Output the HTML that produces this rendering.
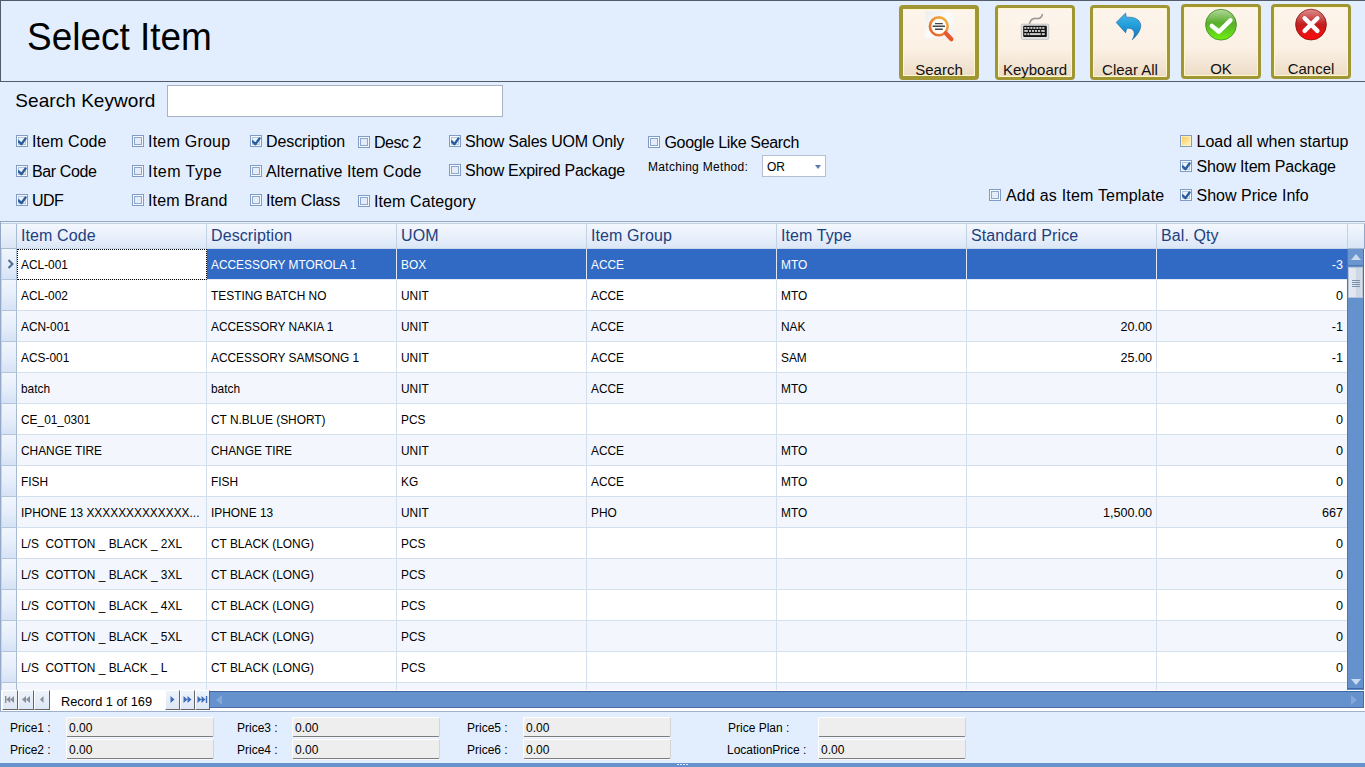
<!DOCTYPE html>
<html><head><meta charset="utf-8">
<style>
*{box-sizing:border-box;margin:0;padding:0}
html,body{width:1365px;height:767px;overflow:hidden}
body{position:relative;background:#e2eefd;font-family:"Liberation Sans",sans-serif;color:#000}
.abs{position:absolute}
.t{position:absolute;white-space:pre;line-height:1}
#hdrpanel{position:absolute;left:0;top:0;width:1366px;height:82px;border:1px solid #535b68;border-right:none}
.btn{position:absolute;width:80px;height:75px;border:3px solid #a09634;border-radius:4px;background:linear-gradient(#fdf5ec 0%,#fbf0e4 60%,#ecdcc6 100%);box-shadow:inset 0 0 0 1px #fff7c8}
.btn .lbl{position:absolute;left:0;right:0;top:53.5px;text-align:center;font-size:15px;letter-spacing:0px;color:#111;line-height:15px}
.cb{position:absolute;width:12px;height:12px;border:1px solid #7f9bc6;background:#eaf3fc;box-shadow:inset 0 0 0 1px #f2f9ff}
.cb.u::after{content:"";box-sizing:border-box;position:absolute;left:1px;top:1px;width:8px;height:8px;border:1px solid #8ea6ca;background:#e3ecf8}
.cb.y{background:linear-gradient(135deg,#f9c94e,#fde9a8 70%,#fff3c8);box-shadow:inset 0 0 0 1px #fff2c0}
.cb.c::before{content:"";box-sizing:border-box;position:absolute;left:1px;top:1px;width:8px;height:8px;border:1px solid #b4c6de}
.cb.c svg{position:absolute;left:1px;top:1px}
.cl{position:absolute;white-space:pre;font-size:16px;line-height:1;color:#000}
#search{position:absolute;left:167px;top:85px;width:336px;height:32px;background:#fff;border:1px solid #a7b2c3}
#grid{position:absolute;left:0;top:221px;width:1365px;height:490px;border-top:1px solid #93a7c6;border-left:1px solid #93a7c6;background:#fff;overflow:hidden}
.hcell{position:absolute;top:222px;height:27px;background:linear-gradient(#f5f8fe,#e9f0fb 55%,#dbe6f6);border-right:1px solid #c3d1e5;border-bottom:1px solid #c8d6ea}
.hcell span{position:absolute;left:4px;top:6px;font-size:16px;line-height:1;color:#213f80;white-space:pre;letter-spacing:0.1px}
.row{position:absolute;left:17px;width:1330px;height:31px}
.cell{position:absolute;top:0;height:31px;border-right:1px solid #d5e0ee;border-bottom:1px solid #d5e0ee;background:#fff}
.row.alt .cell{background:#f3f7fd}
.row.sel .cell{background:#316ac5;color:#fff;border-right-color:#e0e8f4;border-bottom-color:#e0e8f4}
.row.sel .cell.focus{background:#fff;color:#000;outline:1px dotted #000;outline-offset:-1px}
.cell span{position:absolute;left:4px;top:10.9px;font-size:11.9px;line-height:1;white-space:pre}
.cell.r span{left:auto;right:4px;font-size:12.6px;top:10.4px}
.ind{position:absolute;left:1px;width:16px;height:31px;background:linear-gradient(#f1f6fd,#e6eefa 50%,#d5e3f6);border-left:1px solid #c9d7ea;border-right:1px solid #a9bad3;border-bottom:1px solid #b3c4dc}
.nb{position:absolute;top:690px;width:16px;height:20px;background:linear-gradient(#eef3fb,#dde7f5);border-left:1px solid #fff;border-top:1px solid #fff;border-right:1px solid #666;border-bottom:1px solid #666}
.nb svg{position:absolute;left:0;top:0}
.pl{position:absolute;font-size:12px;line-height:1;white-space:pre;color:#000}
.pf{position:absolute;width:148px;height:20px;background:#eeeeee;border-bottom:1px solid #7c7c7c;border-top:1px solid #fff;border-left:1px solid #fff;border-right:1px solid #d4d4d4;border-radius:2px;box-shadow:0 1px 0 #f4f8fd}
.pf span{position:absolute;left:2px;top:4px;font-size:12px;line-height:1}
</style></head><body>

<div id="hdrpanel"></div>
<div class="t" style="left:27.3px;top:17.2px;font-size:39px;transform:scaleX(0.947);transform-origin:0 0">Select Item</div>

<div class="btn" style="left:899px;top:5px;border-width:4px"><div class="lbl" style="top:52.5px">Search</div></div>
<div class="btn" style="left:995px;top:5px"><div class="lbl">Keyboard</div></div>
<div class="btn" style="left:1090px;top:5px"><div class="lbl">Clear All</div></div>
<div class="btn" style="left:1181px;top:4px"><div class="lbl">OK</div></div>
<div class="btn" style="left:1271px;top:4px"><div class="lbl">Cancel</div></div>


<!-- button icons -->
<svg class="abs" style="left:918px;top:6px" width="42" height="38" viewBox="0 0 42 38">
 <defs>
  <linearGradient id="docg" x1="0" y1="0" x2="1" y2="1"><stop offset="0" stop-color="#ededed"/><stop offset="0.5" stop-color="#fbfbfb"/><stop offset="1" stop-color="#f2f2f2"/></linearGradient>
  <linearGradient id="ring" x1="1" y1="0" x2="0" y2="1"><stop offset="0" stop-color="#f2bd48"/><stop offset="1" stop-color="#e85a26"/></linearGradient>
 </defs>
 <path d="M7 5 H31 L35 9 V32 H7 Z" fill="url(#docg)"/>
 <circle cx="20.8" cy="20.3" r="8.9" fill="#fff" stroke="url(#ring)" stroke-width="2.6"/>
 <path d="M27.8 27.3 L33.4 33.2" stroke="#e8582a" stroke-width="4.2" stroke-linecap="round"/>
 <path d="M17 17.6 H24.8 M14.6 20.3 H27 M17 23.3 H24.8" stroke="#444" stroke-width="1.4"/>
</svg>
<svg class="abs" style="left:1014px;top:8px" width="42" height="36" viewBox="0 0 42 36">
 <path d="M15.5 15.8 C16.5 11 19 9.8 23 10.5 C26 11 27.5 9.5 28.4 6.6" stroke="#9a9a9a" stroke-width="1.6" fill="none" stroke-linecap="round"/>
 <rect x="7.3" y="16.2" width="27.4" height="15.2" rx="1" fill="#e2e2e2" stroke="#bdbdbd" stroke-width="0.8"/>
 <rect x="9.2" y="17.8" width="23.6" height="11.1" rx="1" fill="#111"/>
 <g fill="#c8c8c8">
  <rect x="10.3" y="19" width="2.1" height="1.9"/><rect x="13.3" y="19" width="2.1" height="1.9"/><rect x="16.3" y="19" width="2.1" height="1.9"/><rect x="19.3" y="19" width="2.1" height="1.9"/><rect x="22.3" y="19" width="2.1" height="1.9"/><rect x="25.3" y="19" width="2.1" height="1.9"/><rect x="28.3" y="19" width="2.1" height="1.9"/>
  <rect x="10.3" y="22" width="3.6" height="1.9"/><rect x="15" y="22" width="2.1" height="1.9"/><rect x="18" y="22" width="2.1" height="1.9"/><rect x="21" y="22" width="2.1" height="1.9"/><rect x="24" y="22" width="2.1" height="1.9"/><rect x="27.2" y="22" width="3.6" height="1.9"/>
  <rect x="10.3" y="25.1" width="2.1" height="2"/><rect x="13.3" y="25.1" width="2.1" height="2"/><rect x="16" y="25.1" width="10.8" height="2"/><rect x="27.8" y="25.1" width="3" height="2"/>
 </g>
</svg>
<svg class="abs" style="left:1108px;top:8px" width="42" height="38" viewBox="0 0 42 38">
 <defs><linearGradient id="arr" x1="0" y1="0" x2="0" y2="1"><stop offset="0" stop-color="#4cb4e6"/><stop offset="0.45" stop-color="#22a0dc"/><stop offset="1" stop-color="#1670b4"/></linearGradient></defs>
 <path d="M8.2 14.4 L17.6 5 L18.3 9.2 C24 9 30 9.5 32.4 15.5 C34 20 30 27 24.3 31.7 C26.6 27.5 27 24 24.8 21.9 C23 20.3 21 20.2 18.8 20.4 L17.6 24.8 Z" fill="url(#arr)" stroke="#1a5f98" stroke-width="0.6" stroke-linejoin="round"/>
</svg>
<svg class="abs" style="left:1200px;top:4px" width="42" height="42" viewBox="0 0 42 42">
 <defs><linearGradient id="okg" x1="0" y1="0" x2="0" y2="1"><stop offset="0" stop-color="#b4d89a"/><stop offset="0.45" stop-color="#58ae2c"/><stop offset="1" stop-color="#6ef010"/></linearGradient></defs>
 <circle cx="21" cy="20.7" r="15.4" fill="url(#okg)" stroke="#3e8a22" stroke-width="0.8"/>
 <path d="M11.8 21.9 L18.9 27.8 L30.4 16.4" stroke="#fff" stroke-width="4.4" fill="none" stroke-linecap="round" stroke-linejoin="round"/>
</svg>
<svg class="abs" style="left:1290px;top:4px" width="42" height="42" viewBox="0 0 42 42">
 <defs><linearGradient id="cag" x1="0" y1="0" x2="0" y2="1"><stop offset="0" stop-color="#dc9090"/><stop offset="0.5" stop-color="#c21e1e"/><stop offset="1" stop-color="#ff0a0a"/></linearGradient></defs>
 <circle cx="21" cy="20.6" r="15.4" fill="url(#cag)" stroke="#8a1010" stroke-width="0.8"/>
 <path d="M14.6 14.3 L27.4 26.9 M27.4 14.3 L14.6 26.9" stroke="#fff" stroke-width="4.4" stroke-linecap="round"/>
</svg>

<div class="t" style="left:15.3px;top:91.4px;font-size:19px;letter-spacing:0.05px">Search Keyword</div>
<div id="search"></div>

<div class="cb c" style="left:16px;top:135px"><svg width="10" height="10" viewBox="0 0 10 10"><path d="M0.6 4.4 L3.4 7.2 L7.6 1.4" stroke="#2b5d9c" stroke-width="2.4" fill="none" stroke-linecap="round" stroke-linejoin="round"/></svg></div>
<div class="cl" style="left:32px;top:133.5px;letter-spacing:0.086px">Item Code</div>
<div class="cb c" style="left:16px;top:165px"><svg width="10" height="10" viewBox="0 0 10 10"><path d="M0.6 4.4 L3.4 7.2 L7.6 1.4" stroke="#2b5d9c" stroke-width="2.4" fill="none" stroke-linecap="round" stroke-linejoin="round"/></svg></div>
<div class="cl" style="left:32px;top:163.5px;letter-spacing:-0.399px">Bar Code</div>
<div class="cb c" style="left:16px;top:194px"><svg width="10" height="10" viewBox="0 0 10 10"><path d="M0.6 4.4 L3.4 7.2 L7.6 1.4" stroke="#2b5d9c" stroke-width="2.4" fill="none" stroke-linecap="round" stroke-linejoin="round"/></svg></div>
<div class="cl" style="left:32px;top:192.5px;letter-spacing:-0.500px">UDF</div>
<div class="cb u" style="left:132px;top:135px"></div>
<div class="cl" style="left:148px;top:133.5px;letter-spacing:0.230px">Item Group</div>
<div class="cb u" style="left:132px;top:165px"></div>
<div class="cl" style="left:148px;top:163.5px;letter-spacing:0.455px">Item Type</div>
<div class="cb u" style="left:132px;top:194px"></div>
<div class="cl" style="left:148px;top:192.5px;letter-spacing:0.138px">Item Brand</div>
<div class="cb c" style="left:250px;top:135px"><svg width="10" height="10" viewBox="0 0 10 10"><path d="M0.6 4.4 L3.4 7.2 L7.6 1.4" stroke="#2b5d9c" stroke-width="2.4" fill="none" stroke-linecap="round" stroke-linejoin="round"/></svg></div>
<div class="cl" style="left:266px;top:133.5px;letter-spacing:-0.083px">Description</div>
<div class="cb u" style="left:250px;top:165px"></div>
<div class="cl" style="left:266px;top:163.5px;letter-spacing:0.082px">Alternative Item Code</div>
<div class="cb u" style="left:250px;top:194px"></div>
<div class="cl" style="left:266px;top:192.5px;letter-spacing:-0.152px">Item Class</div>
<div class="cb u" style="left:358px;top:136px"></div>
<div class="cl" style="left:374px;top:134.5px;letter-spacing:-0.459px">Desc 2</div>
<div class="cb u" style="left:358px;top:195px"></div>
<div class="cl" style="left:374px;top:193.5px;letter-spacing:0.110px">Item Category</div>
<div class="cb c" style="left:449px;top:135px"><svg width="10" height="10" viewBox="0 0 10 10"><path d="M0.6 4.4 L3.4 7.2 L7.6 1.4" stroke="#2b5d9c" stroke-width="2.4" fill="none" stroke-linecap="round" stroke-linejoin="round"/></svg></div>
<div class="cl" style="left:465px;top:133.5px;letter-spacing:-0.245px">Show Sales UOM Only</div>
<div class="cb u" style="left:449px;top:164px"></div>
<div class="cl" style="left:465px;top:162.5px;letter-spacing:-0.275px">Show Expired Package</div>
<div class="cb u" style="left:648px;top:136px"></div>
<div class="cl" style="left:664.5px;top:134.5px;letter-spacing:-0.331px">Google Like Search</div>
<div class="cb y" style="left:1180px;top:135px"></div>
<div class="cl" style="left:1196.5px;top:133.5px;letter-spacing:-0.005px">Load all when startup</div>
<div class="cb c" style="left:1180px;top:160px"><svg width="10" height="10" viewBox="0 0 10 10"><path d="M0.6 4.4 L3.4 7.2 L7.6 1.4" stroke="#2b5d9c" stroke-width="2.4" fill="none" stroke-linecap="round" stroke-linejoin="round"/></svg></div>
<div class="cl" style="left:1196.5px;top:158.5px;letter-spacing:-0.175px">Show Item Package</div>
<div class="cb c" style="left:1180px;top:189px"><svg width="10" height="10" viewBox="0 0 10 10"><path d="M0.6 4.4 L3.4 7.2 L7.6 1.4" stroke="#2b5d9c" stroke-width="2.4" fill="none" stroke-linecap="round" stroke-linejoin="round"/></svg></div>
<div class="cl" style="left:1196.5px;top:187.5px;letter-spacing:0.010px">Show Price Info</div>
<div class="cb u" style="left:989px;top:189px"></div>
<div class="cl" style="left:1006px;top:187.5px;letter-spacing:0.197px">Add as Item Template</div>

<div id="grid"></div>
<div class="abs" style="left:1px;top:222px;width:16px;height:27px;background:linear-gradient(#f3f7fd,#dae6f5);border-right:1px solid #a9bad3;border-bottom:1px solid #a9bad3"></div>
<div class="hcell" style="left:17px;width:190px"><span>Item Code</span></div>
<div class="hcell" style="left:207px;width:190px"><span>Description</span></div>
<div class="hcell" style="left:397px;width:190px"><span>UOM</span></div>
<div class="hcell" style="left:587px;width:190px"><span>Item Group</span></div>
<div class="hcell" style="left:777px;width:190px"><span>Item Type</span></div>
<div class="hcell" style="left:967px;width:190px"><span>Standard Price</span></div>
<div class="hcell" style="left:1157px;width:191px"><span>Bal. Qty</span></div>
<div class="abs" style="left:1347px;top:222px;width:18px;height:27px;background:linear-gradient(#f6f9fe,#e5eefa 60%,#d9e5f5);border-left:1px solid #c3d1e5;border-bottom:1px solid #a9bad3;border-right:1px solid #93a7c6;border-top-right-radius:3px"></div>
<div class="abs" style="left:0;top:0;width:1365px;height:690px;overflow:hidden"><div class="row sel" style="top:249px">
<div class="cell focus" style="left:0px;width:190px"><span>ACL-001</span></div>
<div class="cell" style="left:190px;width:190px"><span>ACCESSORY MTOROLA 1</span></div>
<div class="cell" style="left:380px;width:190px"><span>BOX</span></div>
<div class="cell" style="left:570px;width:190px"><span>ACCE</span></div>
<div class="cell" style="left:760px;width:190px"><span>MTO</span></div>
<div class="cell r" style="left:950px;width:190px"><span></span></div>
<div class="cell r" style="left:1140px;width:191px"><span>-3</span></div>
</div>
<div class="ind" style="top:249px"><svg width="8" height="10" viewBox="0 0 8 10" style="position:absolute;left:5px;top:10px"><path d="M1.5 1 L5.5 5 L1.5 9" stroke="#4d6a9a" stroke-width="2" fill="none"/></svg></div>
<div class="row" style="top:280px">
<div class="cell" style="left:0px;width:190px"><span>ACL-002</span></div>
<div class="cell" style="left:190px;width:190px"><span>TESTING BATCH NO</span></div>
<div class="cell" style="left:380px;width:190px"><span>UNIT</span></div>
<div class="cell" style="left:570px;width:190px"><span>ACCE</span></div>
<div class="cell" style="left:760px;width:190px"><span>MTO</span></div>
<div class="cell r" style="left:950px;width:190px"><span></span></div>
<div class="cell r" style="left:1140px;width:191px"><span>0</span></div>
</div>
<div class="ind" style="top:280px"></div>
<div class="row alt" style="top:311px">
<div class="cell" style="left:0px;width:190px"><span>ACN-001</span></div>
<div class="cell" style="left:190px;width:190px"><span>ACCESSORY NAKIA 1</span></div>
<div class="cell" style="left:380px;width:190px"><span>UNIT</span></div>
<div class="cell" style="left:570px;width:190px"><span>ACCE</span></div>
<div class="cell" style="left:760px;width:190px"><span>NAK</span></div>
<div class="cell r" style="left:950px;width:190px"><span>20.00</span></div>
<div class="cell r" style="left:1140px;width:191px"><span>-1</span></div>
</div>
<div class="ind" style="top:311px"></div>
<div class="row" style="top:342px">
<div class="cell" style="left:0px;width:190px"><span>ACS-001</span></div>
<div class="cell" style="left:190px;width:190px"><span>ACCESSORY SAMSONG 1</span></div>
<div class="cell" style="left:380px;width:190px"><span>UNIT</span></div>
<div class="cell" style="left:570px;width:190px"><span>ACCE</span></div>
<div class="cell" style="left:760px;width:190px"><span>SAM</span></div>
<div class="cell r" style="left:950px;width:190px"><span>25.00</span></div>
<div class="cell r" style="left:1140px;width:191px"><span>-1</span></div>
</div>
<div class="ind" style="top:342px"></div>
<div class="row alt" style="top:373px">
<div class="cell" style="left:0px;width:190px"><span>batch</span></div>
<div class="cell" style="left:190px;width:190px"><span>batch</span></div>
<div class="cell" style="left:380px;width:190px"><span>UNIT</span></div>
<div class="cell" style="left:570px;width:190px"><span>ACCE</span></div>
<div class="cell" style="left:760px;width:190px"><span>MTO</span></div>
<div class="cell r" style="left:950px;width:190px"><span></span></div>
<div class="cell r" style="left:1140px;width:191px"><span>0</span></div>
</div>
<div class="ind" style="top:373px"></div>
<div class="row" style="top:404px">
<div class="cell" style="left:0px;width:190px"><span>CE_01_0301</span></div>
<div class="cell" style="left:190px;width:190px"><span>CT N.BLUE (SHORT)</span></div>
<div class="cell" style="left:380px;width:190px"><span>PCS</span></div>
<div class="cell" style="left:570px;width:190px"><span></span></div>
<div class="cell" style="left:760px;width:190px"><span></span></div>
<div class="cell r" style="left:950px;width:190px"><span></span></div>
<div class="cell r" style="left:1140px;width:191px"><span>0</span></div>
</div>
<div class="ind" style="top:404px"></div>
<div class="row alt" style="top:435px">
<div class="cell" style="left:0px;width:190px"><span>CHANGE TIRE</span></div>
<div class="cell" style="left:190px;width:190px"><span>CHANGE TIRE</span></div>
<div class="cell" style="left:380px;width:190px"><span>UNIT</span></div>
<div class="cell" style="left:570px;width:190px"><span>ACCE</span></div>
<div class="cell" style="left:760px;width:190px"><span>MTO</span></div>
<div class="cell r" style="left:950px;width:190px"><span></span></div>
<div class="cell r" style="left:1140px;width:191px"><span>0</span></div>
</div>
<div class="ind" style="top:435px"></div>
<div class="row" style="top:466px">
<div class="cell" style="left:0px;width:190px"><span>FISH</span></div>
<div class="cell" style="left:190px;width:190px"><span>FISH</span></div>
<div class="cell" style="left:380px;width:190px"><span>KG</span></div>
<div class="cell" style="left:570px;width:190px"><span>ACCE</span></div>
<div class="cell" style="left:760px;width:190px"><span>MTO</span></div>
<div class="cell r" style="left:950px;width:190px"><span></span></div>
<div class="cell r" style="left:1140px;width:191px"><span>0</span></div>
</div>
<div class="ind" style="top:466px"></div>
<div class="row alt" style="top:497px">
<div class="cell" style="left:0px;width:190px"><span>IPHONE 13 XXXXXXXXXXXXX...</span></div>
<div class="cell" style="left:190px;width:190px"><span>IPHONE 13</span></div>
<div class="cell" style="left:380px;width:190px"><span>UNIT</span></div>
<div class="cell" style="left:570px;width:190px"><span>PHO</span></div>
<div class="cell" style="left:760px;width:190px"><span>MTO</span></div>
<div class="cell r" style="left:950px;width:190px"><span>1,500.00</span></div>
<div class="cell r" style="left:1140px;width:191px"><span>667</span></div>
</div>
<div class="ind" style="top:497px"></div>
<div class="row" style="top:528px">
<div class="cell" style="left:0px;width:190px"><span>L/S&nbsp; COTTON _ BLACK _ 2XL</span></div>
<div class="cell" style="left:190px;width:190px"><span>CT BLACK (LONG)</span></div>
<div class="cell" style="left:380px;width:190px"><span>PCS</span></div>
<div class="cell" style="left:570px;width:190px"><span></span></div>
<div class="cell" style="left:760px;width:190px"><span></span></div>
<div class="cell r" style="left:950px;width:190px"><span></span></div>
<div class="cell r" style="left:1140px;width:191px"><span>0</span></div>
</div>
<div class="ind" style="top:528px"></div>
<div class="row alt" style="top:559px">
<div class="cell" style="left:0px;width:190px"><span>L/S&nbsp; COTTON _ BLACK _ 3XL</span></div>
<div class="cell" style="left:190px;width:190px"><span>CT BLACK (LONG)</span></div>
<div class="cell" style="left:380px;width:190px"><span>PCS</span></div>
<div class="cell" style="left:570px;width:190px"><span></span></div>
<div class="cell" style="left:760px;width:190px"><span></span></div>
<div class="cell r" style="left:950px;width:190px"><span></span></div>
<div class="cell r" style="left:1140px;width:191px"><span>0</span></div>
</div>
<div class="ind" style="top:559px"></div>
<div class="row" style="top:590px">
<div class="cell" style="left:0px;width:190px"><span>L/S&nbsp; COTTON _ BLACK _ 4XL</span></div>
<div class="cell" style="left:190px;width:190px"><span>CT BLACK (LONG)</span></div>
<div class="cell" style="left:380px;width:190px"><span>PCS</span></div>
<div class="cell" style="left:570px;width:190px"><span></span></div>
<div class="cell" style="left:760px;width:190px"><span></span></div>
<div class="cell r" style="left:950px;width:190px"><span></span></div>
<div class="cell r" style="left:1140px;width:191px"><span>0</span></div>
</div>
<div class="ind" style="top:590px"></div>
<div class="row alt" style="top:621px">
<div class="cell" style="left:0px;width:190px"><span>L/S&nbsp; COTTON _ BLACK _ 5XL</span></div>
<div class="cell" style="left:190px;width:190px"><span>CT BLACK (LONG)</span></div>
<div class="cell" style="left:380px;width:190px"><span>PCS</span></div>
<div class="cell" style="left:570px;width:190px"><span></span></div>
<div class="cell" style="left:760px;width:190px"><span></span></div>
<div class="cell r" style="left:950px;width:190px"><span></span></div>
<div class="cell r" style="left:1140px;width:191px"><span>0</span></div>
</div>
<div class="ind" style="top:621px"></div>
<div class="row" style="top:652px">
<div class="cell" style="left:0px;width:190px"><span>L/S&nbsp; COTTON _ BLACK _ L</span></div>
<div class="cell" style="left:190px;width:190px"><span>CT BLACK (LONG)</span></div>
<div class="cell" style="left:380px;width:190px"><span>PCS</span></div>
<div class="cell" style="left:570px;width:190px"><span></span></div>
<div class="cell" style="left:760px;width:190px"><span></span></div>
<div class="cell r" style="left:950px;width:190px"><span></span></div>
<div class="cell r" style="left:1140px;width:191px"><span>0</span></div>
</div>
<div class="ind" style="top:652px"></div>
<div class="row alt" style="top:683px">
<div class="cell" style="left:0px;width:190px"><span></span></div>
<div class="cell" style="left:190px;width:190px"><span></span></div>
<div class="cell" style="left:380px;width:190px"><span></span></div>
<div class="cell" style="left:570px;width:190px"><span></span></div>
<div class="cell" style="left:760px;width:190px"><span></span></div>
<div class="cell r" style="left:950px;width:190px"><span></span></div>
<div class="cell r" style="left:1140px;width:191px"><span></span></div>
</div>
<div class="ind" style="top:683px"></div></div>
<div class="abs" style="left:1px;top:222px;width:1363px;height:1px;background:#eaf1fb"></div>
<div class="abs" style="left:1px;top:223px;width:1363px;height:1px;background:#c3d0e2"></div>

<!-- matching method -->
<div class="t" style="left:648px;top:161px;font-size:12px;letter-spacing:0.3px">Matching Method:</div>
<div class="abs" style="left:762px;top:155px;width:64px;height:22px;background:#fff;border:1px solid #b3bfd0"><span class="t" style="left:4px;top:5px;font-size:12px">OR</span><svg class="abs" style="left:52px;top:9px" width="7" height="4"><path d="M0 0H6L3 4Z" fill="#5a7bb0"/></svg></div>

<!-- vertical scrollbar -->
<div class="abs" style="left:1347px;top:249px;width:17px;height:441px;background:#6591cd;border-left:1px solid #4d77b3;border-right:1px solid #4a6ea6"></div>
<div class="abs" style="left:1348px;top:249px;width:15px;height:17px;background:#6a95ce;border-bottom:1px solid #4f78b2"><svg class="abs" style="left:3px;top:5px" width="10" height="6"><path d="M0 6H10L5 0Z" fill="#c9daf1"/></svg></div>
<div class="abs" style="left:1348px;top:267px;width:15px;height:31px;background:linear-gradient(90deg,#e4e9f1,#dfe5ee 50%,#c9d3e1 60%,#d6dde8);border:1px solid #b4c3d8"><div class="abs" style="left:3px;top:12px;width:8px;height:1px;background:#7d8fa9;box-shadow:0 2px 0 #7d8fa9,0 4px 0 #7d8fa9,0 6px 0 #7d8fa9"></div></div>
<div class="abs" style="left:1348px;top:673px;width:15px;height:16px;background:#6591cd;border-bottom:1px solid #3f67a2"><svg class="abs" style="left:3px;top:6px" width="10" height="6"><path d="M0 0H10L5 6Z" fill="#c9daf1"/></svg></div>

<!-- navigator -->
<div class="abs" style="left:1px;top:690px;width:209px;height:21px;background:#fff"></div>
<div class="nb" style="left:2px"><svg width="14" height="18"><path d="M2 5h1.4v7H2z M7.2 5 L3.4 8.5 L7.2 12z M11 5 L7.2 8.5 L11 12z" fill="#8a8f96"/></svg></div>
<div class="nb" style="left:18px"><svg width="14" height="18"><path d="M7 5 L3 8.5 L7 12z M11 5 L7 8.5 L11 12z" fill="#8a8f96"/></svg></div>
<div class="nb" style="left:34px"><svg width="14" height="18"><path d="M8.5 5 L5 8.5 L8.5 12z" fill="#8a8f96"/></svg></div>
<div class="t" style="left:61px;top:695.5px;font-size:12.8px">Record 1 of 169</div>
<div class="nb" style="left:165px;width:15px"><svg width="14" height="18"><path d="M4.5 5 L8.5 8.5 L4.5 12z" fill="#3e6cb9"/></svg></div>
<div class="nb" style="left:180px;width:15px"><svg width="14" height="18"><path d="M2.5 5 L6.5 8.5 L2.5 12z M6.5 5 L10.5 8.5 L6.5 12z" fill="#3e6cb9"/></svg></div>
<div class="nb" style="left:195px;width:15px"><svg width="14" height="18"><path d="M1.5 5 L5.5 8.5 L1.5 12z M5.5 5 L9.5 8.5 L5.5 12z M9.8 5h1.4v7H9.8z" fill="#3e6cb9"/></svg></div>
<!-- horizontal scrollbar -->
<div class="abs" style="left:210px;top:691px;width:1154px;height:17px;background:#6591cd;border-top:1px solid #3f67a2;border-bottom:1px solid #4a6ea6;border-right:1px solid #4a6ea6"><svg class="abs" style="left:6px;top:3px" width="6" height="10"><path d="M6 0V10L0 5Z" fill="#86a8d8"/></svg><svg class="abs" style="right:6px;top:3px" width="6" height="10"><path d="M0 0V10L6 5Z" fill="#86a8d8"/></svg></div>
<div class="abs" style="left:0px;top:711px;width:1365px;height:1px;background:#9fb1cb"></div>

<!-- bottom price panel -->
<div class="pl" style="left:10px;top:722px">Price1 :</div>
<div class="pf" style="left:66px;top:717px"><span>0.00</span></div>
<div class="pl" style="left:10px;top:744px">Price2 :</div>
<div class="pf" style="left:66px;top:739px"><span>0.00</span></div>
<div class="pl" style="left:237px;top:722px">Price3 :</div>
<div class="pf" style="left:292px;top:717px"><span>0.00</span></div>
<div class="pl" style="left:237px;top:744px">Price4 :</div>
<div class="pf" style="left:292px;top:739px"><span>0.00</span></div>
<div class="pl" style="left:467px;top:722px">Price5 :</div>
<div class="pf" style="left:523px;top:717px"><span>0.00</span></div>
<div class="pl" style="left:467px;top:744px">Price6 :</div>
<div class="pf" style="left:523px;top:739px"><span>0.00</span></div>
<div class="pl" style="left:728px;top:722px">Price Plan :</div>
<div class="pf" style="left:818px;top:717px"><span></span></div>
<div class="pl" style="left:727px;top:744px">LocationPrice :</div>
<div class="pf" style="left:818px;top:739px"><span>0.00</span></div>
<div class="abs" style="left:0;top:763px;width:1365px;height:4px;background:#6591cd"></div>
<div class="abs" style="left:677px;top:764px;width:12px;height:1px;background-image:repeating-linear-gradient(90deg,#dfe9f7 0 2px,transparent 2px 3px)"></div>

</body></html>
